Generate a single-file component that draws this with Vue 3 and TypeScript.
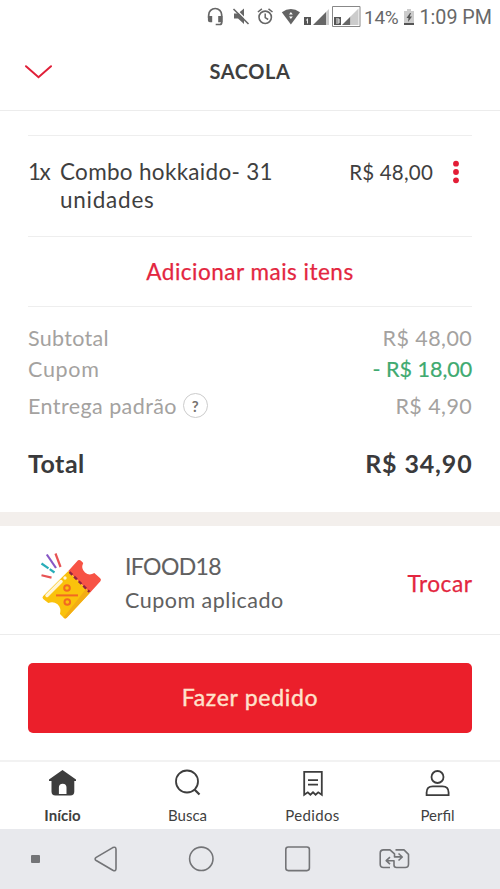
<script setup lang="ts">
interface SummaryRow {
  id: string
  label: string
  value: string
  help?: boolean
}

interface Tab {
  id: string
  label: string
}

const rows: SummaryRow[] = [
  { id: 'subtotal', label: 'Subtotal', value: 'R$ 48,00' },
  { id: 'coupon', label: 'Cupom', value: '- R$ 18,00' },
  { id: 'delivery', label: 'Entrega padrão', value: 'R$ 4,90', help: true },
  { id: 'total', label: 'Total', value: 'R$ 34,90' },
]

const tabs: Tab[] = [
  { id: 'home', label: 'Início' },
  { id: 'search', label: 'Busca' },
  { id: 'orders', label: 'Pedidos' },
  { id: 'profile', label: 'Perfil' },
]
</script>

<template>
  <div class="screen">
    <div class="status">
      <svg class="status-icons" width="157" height="34" viewBox="0 0 157 34">
        <!-- headset -->
        <path d="M2 18v-3a6.500 6.500 0 0 1 13 0v7.500a2 2 0 0 1-2 2H9" transform="translate(.7)" fill="none" stroke="#666" stroke-width="1.700" />
        <path d="M1.900 16h4.300v6.300H3.900a2 2 0 0 1-2-2zM12.200 16h4.300v6.300h-4.300z" fill="#666" />
        <!-- muted speaker -->
        <path d="M28 13.500h4l6-5v15.500l-6-5.500h-4z" fill="#666" />
        <path d="M28.500 8l15.500 15.500" stroke="#fff" stroke-width="1.500" />
        <path d="M27.500 9l15 15" stroke="#666" stroke-width="1.600" />
        <!-- alarm -->
        <circle cx="59.200" cy="17.300" r="6.200" fill="none" stroke="#666" stroke-width="1.600" />
        <path d="M59.200 13.500v4.200l3 1.800M51.900 12l4-3.200M66.500 12l-4-3.200" fill="none" stroke="#666" stroke-width="1.500" />
        <!-- wifi -->
        <path d="M75.800 12.200q9-6.600 18.200 0L84.900 24.500z" fill="#636363" />
        <path d="M83 14.500l1.900-2.500 1.900 2.500zM83 16.500l1.900 2.500 1.900-2.500z" fill="#fff" />
        <!-- first SIM signal -->
        <path d="M107 25l13-13v13z" fill="#666" /><path d="M120 12l3-3V25h-3z" fill="#ccc" />
        <path d="M98 17h7v8h-7z" fill="#555" /><path d="M101.500 18.500v5M100 20h1.500" stroke="#eee" />
        <!-- second SIM signal -->
        <path d="M126.500 6.500h27.500v20h-27.500z" fill="#fff" stroke="#888" stroke-width="1" />
        <path d="M136 25l8.500-8.500V25z" fill="#666" /><path d="M144.500 16.500l8-8V25h-8z" fill="#ccc" />
        <path d="M128 17h7v8h-7z" fill="#555" /><path d="M130 19h3v4h-3M130 21h3" fill="none" stroke="#eee" />
      </svg>
      <span class="percent">14%</span>
      <svg class="battery" width="12" height="18" viewBox="0 0 12 18">
        <path d="M4 1h4v2h3v14H1V3h3z" fill="#ccc" />
        <path d="M1 15h10v2H1z" fill="#555" />
        <path d="M7 5L3.500 10h2L5 14l4-5.500H6.700L8 5z" fill="#555" />
      </svg>
      <span class="clock">1:09 PM</span>
    </div>

    <header class="header">
      <svg class="chevron" width="28" height="16" viewBox="0 0 28 16">
        <path d="M2 2.200L14.500 13.200L27 2.200" fill="none" stroke="#e01f38" stroke-width="2" stroke-linecap="round" />
      </svg>
      <h1 class="title"><span>SACOLA</span></h1>
    </header>

    <main class="bag">
      <section class="item">
        <span class="qty">1x</span>
        <p class="name"><span class="name-a">Combo hokkaido- 31</span><br /><span class="name-b">unidades</span></p>
        <span class="price">R$ 48,00</span>
        <svg class="more" width="8" height="26" viewBox="0 0 8 26">
          <circle cx="4" cy="4.700" r="2.900" fill="#e31d36" />
          <circle cx="4" cy="13" r="2.900" fill="#e31d36" />
          <circle cx="4" cy="21.300" r="2.900" fill="#e31d36" />
        </svg>
      </section>
      <div class="add"><span>Adicionar mais itens</span></div>
      <section class="summary">
        <div v-for="row in rows" :key="row.id" class="row" :class="row.id">
          <span class="label">{{ row.label }}</span>
          <span v-if="row.help" class="help">?</span>
          <span class="value">{{ row.value }}</span>
        </div>
      </section>
    </main>

    <section class="voucher">
      <svg class="ticket" width="64" height="68" viewBox="0 0 64 68">
        <g fill="none" stroke-width="2.200">
          <path d="M6.800 2.500l9.200 13.500" stroke="#8757c5" />
          <path d="M15.500 1.500l5 13.500" stroke="#e75354" />
          <path d="M1.500 11.500l13 9" stroke="#28adb9" stroke-dasharray="8.500 1.500" />
          <path d="M1.500 23.300l10 2.300" stroke="#e75354" />
        </g>
        <path d="M28.300 19L38 8.300q1.500-1 3 .500l2.200 2.200q-2.600 5.700 1.800 9.500 4.300 3.500 9.300.500l5.900 5.300q1.500 1.500.200 3L50 40.800z" fill="#f75345" />
        <path d="M28.300 19L50 40.800 26.500 66q-1.500 1-3-.500l-3.500-3.500q1.500-6-2.500-9.700-4-3.200-9.200-1.300L3.200 47q-1.500-1.500 0-3z" fill="#fac20c" />
        <path d="M50 40.800L26.500 66q-1.500 1-3-.500L46 37z" fill="#f3ad13" />
        <path d="M29.500 20L49.500 40" fill="none" stroke="#8e2240" stroke-width="2.300" stroke-dasharray="4 2.500" />
        <path d="M7 43.500l14-14" fill="none" stroke="#fff5d6" stroke-width="3.500" stroke-linecap="round" />
        <circle cx="25" cy="26" r="1.700" fill="#fff5d6" />
        <g fill="none" stroke="#f26922" stroke-width="2">
          <circle cx="27" cy="36" r="2.800" /><circle cx="27.300" cy="50" r="2.800" /><path d="M16 43.400h22" />
        </g>
      </svg>
      <div class="voucher-text">
        <strong><span>IFOOD18</span></strong>
        <p><span>Cupom aplicado</span></p>
      </div>
      <span class="change">Trocar</span>
    </section>

    <div class="checkout">
      <button type="button"><span>Fazer pedido</span></button>
    </div>

    <nav class="tabs">
      <div v-for="tab in tabs" :key="tab.id" class="tab" :class="'tab-' + tab.id">
        <svg width="30" height="30" viewBox="0 0 30 30" fill="none" stroke="#3d3d3d" stroke-width="1.800">
          <path v-if="tab.id === 'home'" fill="#3d3d3d" stroke="none" fill-rule="evenodd" d="M14.500 2L28 11.500V13H26.300v10.500q0 4-4 4H7.500q-4 0-4-4V13H1v-1.500zM10.900 26V19.500a3.800 3.800 0 0 1 7.600 0V26z" />
          <g v-else-if="tab.id === 'search'"><circle cx="14" cy="13.500" r="11" /><path d="M21.500 21.500l5 5" stroke-width="2.200" /></g>
          <path v-else-if="tab.id === 'orders'" d="M6.200 3.800h17.600v22.900l-3.600-2.400-2.600 2.400-2.600-2.400-2.600 2.400-2.600-2.400-3.600 2.400zM10 12.200h10M10 16.600h10" />
          <g v-else><circle cx="14.500" cy="9" r="6" /><path d="M3.600 27.200v-2.700q0-6.200 6.200-6.200h9.600q6.200 0 6.200 6.200v2.700z" /></g>
        </svg>
        <span class="tab-label">{{ tab.label }}</span>
      </div>
    </nav>

    <div class="system">
      <svg width="500" height="60" viewBox="0 0 500 60" fill="none" stroke="#737477" stroke-width="1.600" stroke-linejoin="round">
        <rect x="31" y="26" width="9" height="8" rx="1" fill="#737477" stroke="none" />
        <path d="M96.200 28.400L112.800 18.600Q116 17.200 116 20.500V39.500Q116 42.700 112.800 41.200L96.200 31.500Q94 30 96.200 28.400Z" />
        <circle cx="201.300" cy="29.800" r="11.700" />
        <rect x="285.800" y="18" width="23.600" height="23.600" rx="2.500" />
        <path d="M390 38.500h-6.500q-3.300 0-3.300-3.300v-11q0-3.300 3.300-3.300h6.500l4.500 4v3h7.800M398.500 24.500l3.800 3.500-3.800 3.500M395.500 20.900h8.500l4.500 4.500v9.800q0 3.300-3.300 3.300h-8.700q-2.500 0-2.500-2.500v-4.300h-7.500M390 28.200l-3.800 3.500 3.800 3.500" />
      </svg>
    </div>
  </div>
</template>

<style>
body { margin: 0; background: #fff; }
</style>

<style scoped>
* { box-sizing: border-box; }
.screen { width: 500px; height: 889px; display: flex; flex-direction: column; overflow: hidden; background: #fff; font-family: Lato, "Liberation Sans", sans-serif; color: #3f3f3f; white-space: nowrap; }
h1, p { margin: 0; font-weight: inherit; font-size: inherit; }
.status { height: 34px; flex: none; display: flex; align-items: center; padding-left: 200px; font-family: Roboto, sans-serif; color: #686868; font-size: 19px; }
.status-icons { flex: none; margin-left: 6px; }
.percent { width: 34px; margin-left: 1px; letter-spacing: -.3px; }
.battery { flex: none; margin-left: 5px; }
.clock { margin-left: 4.500px; padding-top: 1px; font-size: 19.700px; }
.header { height: 77px; flex: none; display: flex; align-items: center; padding: 0 24px; border-bottom: 1px solid #ececec; }
.chevron { flex: none; }
.title { flex: 1; margin-right: 28px; padding-bottom: 2px; text-align: center; font-size: 20px; font-weight: 700; letter-spacing: .6px; }
.bag { height: 401px; flex: none; margin: 24px 28px -24px; border-top: 1px solid #eee; }
.item { height: 101px; display: flex; align-items: flex-start; padding-top: 22px; border-bottom: 1px solid #eee; font-size: 22.500px; line-height: 28px; }
.qty { width: 32px; flex: none; letter-spacing: -1.500px; }
.name { flex: 1; }
.name-a { letter-spacing: .3px; }
.name-b { letter-spacing: .75px; }
.price { font-size: 20.500px; margin-right: 18.500px; letter-spacing: .2px; }
.more { flex: none; margin: 1px 12.500px 0 0; }
.add { height: 70px; display: flex; align-items: center; justify-content: center; border-bottom: 1px solid #eee; color: #e32640; font-size: 22.500px; letter-spacing: .5px; -webkit-text-stroke: .25px; }
.summary { padding-top: 15px; color: #a4a2a0; }
.row { display: flex; align-items: center; height: 32px; font-size: 21.500px; letter-spacing: .3px; }
.row .value { margin-left: auto; margin-right: -.3px; letter-spacing: .45px; }
.coupon { height: 30px; }
.coupon .label { letter-spacing: .7px; }
.row.coupon .value { color: #40aa70; letter-spacing: 0; -webkit-text-stroke: .2px; }
.delivery { height: 43px; }
.delivery .label { letter-spacing: .42px; }
.help { width: 25px; height: 25px; margin-left: 6px; border: 1.500px solid #ccc; border-radius: 50%; display: flex; align-items: center; justify-content: center; color: #77736f; font-size: 15px; font-weight: 700; }
.total { height: 72px; color: #3a3a3c; font-size: 25px; font-weight: 700; }
.total .label { letter-spacing: .5px; }
.row.total .value { letter-spacing: .85px; margin-right: -.5px; }
.voucher { height: 123px; flex: none; display: flex; align-items: center; border-top: 14px solid #f3efec; border-bottom: 1px solid #ececec; padding: 0 28px 0 40px; }
.ticket { flex: none; margin-top: 11px; }
.voucher-text { margin-left: 21px; padding-top: 6px; color: #606060; }
.voucher-text strong { display: block; font-size: 23px; font-weight: 400; line-height: 34px; letter-spacing: -.6px; -webkit-text-stroke: .1px; }
.voucher-text p { font-size: 21.500px; line-height: 34px; letter-spacing: .5px; }
.change { margin-left: auto; margin-top: 6px; color: #e32640; font-size: 22.700px; letter-spacing: .5px; margin-right: -.5px; -webkit-text-stroke: .25px; }
.checkout { height: 125px; flex: none; padding: 28px 28px 0; }
.checkout button { display: block; width: 444px; height: 70px; border: 0; border-radius: 5px; padding: 0 0 2px; background: #eb1f2b; color: #ffe2cc; font: 400 23px Lato, sans-serif; letter-spacing: .7px; -webkit-text-stroke: .4px; }
.tabs { height: 69px; flex: none; display: flex; border-top: 2px solid #f2f2f2; }
.tab { width: 125px; display: flex; flex-direction: column; align-items: center; padding-top: 6px; }
.tab-label { font-size: 15px; line-height: 18px; margin-top: 8px; }
.tab-home .tab-label { font-weight: 700; }
.tab-orders .tab-label { letter-spacing: .35px; }
.system { height: 60px; flex: none; background: #e8e9ed; }
.system svg { display: block; }
</style>
